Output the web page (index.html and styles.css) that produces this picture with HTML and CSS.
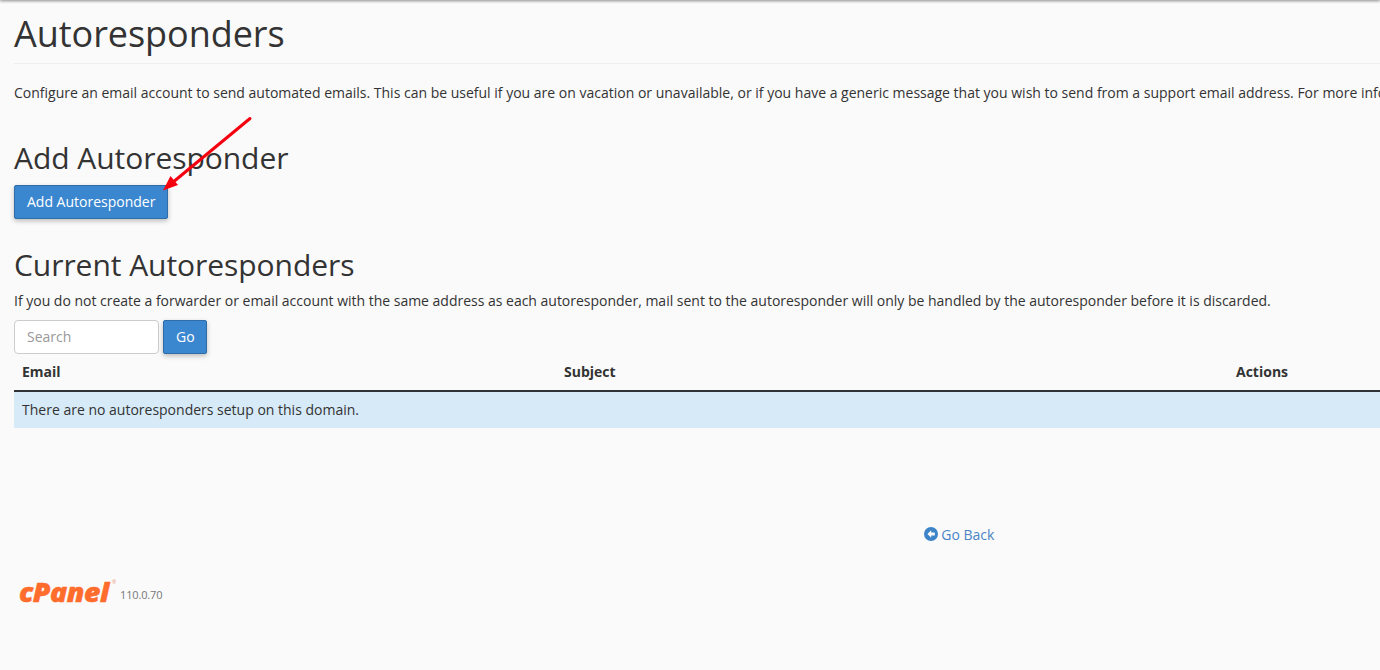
FILE: index.html
```html
<!DOCTYPE html>
<html lang="en">
<head>
<meta charset="utf-8">
<title>Autoresponders</title>
<link rel="stylesheet" href="styles.css">
</head>
<body>
<div class="topbar"></div>
<main class="page">
  <h1 class="title">Autoresponders</h1>
  <p class="desc">Configure an email account to send automated emails. This can be useful if you are on vacation or unavailable, or if you have a generic message that you wish to send from a support email address. For more information, read the documentation.</p>
  <h2 class="heading add-heading">Add Autoresponder</h2>
  <a class="btn add-btn" href="#">Add Autoresponder</a>
  <h2 class="heading current-heading">Current Autoresponders</h2>
  <p class="note">If you do not create a forwarder or email account with the same address as each autoresponder, mail sent to the autoresponder will only be handled by the autoresponder before it is discarded.</p>
  <form class="search">
    <input class="search-input" type="text" placeholder="Search">
    <button class="btn go" type="button">Go</button>
  </form>
  <table class="table">
    <thead>
      <tr><th class="col-email">Email</th><th class="col-subject">Subject</th><th>Actions</th></tr>
    </thead>
    <tbody>
      <tr class="info"><td colspan="3">There are no autoresponders setup on this domain.</td></tr>
    </tbody>
  </table>
  <div class="back">
    <a href="#" class="back-link">
      <svg class="back-icon" viewBox="0 0 14 14" width="14" height="14" aria-hidden="true"><circle cx="7" cy="7" r="7" fill="#3d83c8"/><path d="M7.2 3.2 3.4 7l3.8 3.800V8.400h3.600V5.600H7.200z" fill="#fafafa"/></svg>
      Go Back
    </a>
  </div>
  <footer class="footer">
    <span class="logo">cPanel</span>
    <span class="reg">®</span>
    <span class="version">110.0.70</span>
  </footer>
</main>
<svg class="arrow" width="100" height="85" viewBox="0 0 100 85" aria-hidden="true">
  <path d="M88 2.500 10 67" stroke="#f5000f" stroke-width="3" stroke-linecap="round" fill="none"/>
  <path d="M1 74.500 8.500 60 16 69z" fill="#f5000f"/>
</svg>
</body>
</html>
```
FILE: styles.css
```css
* { box-sizing: border-box; }
html, body { margin: 0; height: 100%; }
body {
  position: relative;
  height: 670px;
  overflow: hidden;
  background: #fafafa;
  color: #333;
  font-family: "Open Sans", sans-serif;
  font-size: 14px;
  line-height: 20px;
}
.topbar {
  position: absolute;
  top: -2px; left: 0; right: 0;
  height: 2px;
  box-shadow: 0 1px 3px rgba(0,0,0,.55);
}
.page { width: 1904px; padding-left: 14px; }
.title {
  margin: 0;
  height: 64px;
  padding-top: 14px;
  border-bottom: 1px solid #eee;
  font-size: 36px;
  line-height: 40px;
  font-weight: 400;
  letter-spacing: -.05px;
}
.desc { margin: 19px 0 0; white-space: nowrap; }
.heading { margin: 0; font-size: 30px; line-height: 33px; font-weight: 400; letter-spacing: -.05px; }
.add-heading { margin-top: 38px; }
.btn {
  display: inline-block;
  height: 34px;
  padding: 6px 12px;
  background: #3a87cf;
  border: 1px solid #2e6da8;
  border-radius: 2px;
  color: #fff;
  font: 400 14px/20px "Open Sans", sans-serif;
  text-decoration: none;
  white-space: nowrap;
  box-shadow: 0 2px 5px rgba(0,0,0,.25);
}
.add-btn { margin-top: 11px; display: block; width: 154px; }
.current-heading { margin-top: 29px; }
.note { margin: 10px 0 0; letter-spacing: -.01px; }
.search { display: flex; gap: 4px; margin-top: 9px; }
.search-input {
  width: 145px;
  height: 34px;
  padding: 5px 12px 7px;
  border: 1px solid #ccc;
  border-radius: 4px;
  background: #fff;
  font: 400 14px/20px "Open Sans", sans-serif;
  color: #555;
}
.search-input::placeholder { color: #999; opacity: 1; }
.go { width: 44px; }
.table { width: 100%; margin-top: -1px; border-collapse: collapse; table-layout: fixed; }
.table th {
  height: 38px;
  padding: 8px;
  text-align: left;
  font-weight: 700;
  border-bottom: 2px solid #2f3338;
}
.col-email { width: 542px; }
.col-subject { width: 672px; }
.info td { height: 36px; padding: 8px; background: #d6eaf8; }
.back { margin-top: 97px; text-align: center; height: 20px; }
.back-link { color: #4a84c4; text-decoration: none; }
.back-icon { vertical-align: -1px; }
.footer { position: relative; display: flex; align-items: center; margin-top: 38px; padding-left: 5px; height: 24px; }
.logo {
  color: #ff6c2c;
  font: italic 800 26px/24px "Open Sans", sans-serif;
  letter-spacing: -.4px;
  -webkit-text-stroke: .5px #ff6c2c;
  width: 101px;
  margin-bottom: 6px;
  transform: scaleX(1.09);
  transform-origin: left center;
}
.reg {
  position: absolute;
  top: -5px;
  left: 98px;
  font: 400 5px/8px "Open Sans", sans-serif;
  color: #e8a080;
}
.version { font-size: 11px; color: #777; letter-spacing: -.15px; }
.arrow { position: absolute; left: 162px; top: 116px; }
```
